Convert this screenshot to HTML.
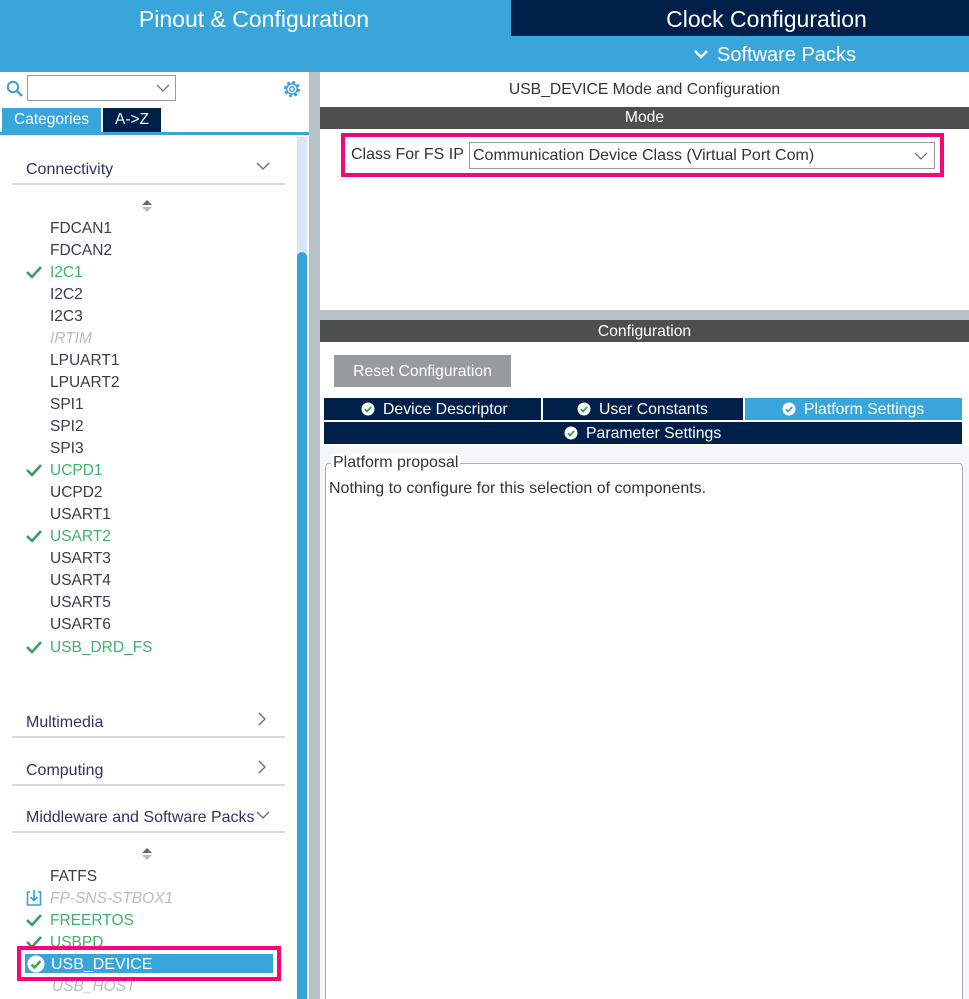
<!DOCTYPE html>
<html><head><meta charset="utf-8"><style>
*{margin:0;padding:0;box-sizing:border-box}
html,body{width:969px;height:999px;overflow:hidden}
body{background:#fff;font-family:"Liberation Sans",Arial,sans-serif;position:relative}
div,span{position:absolute}
.it{left:50px;font-size:15.5px;line-height:20px;color:#3a3a4a;white-space:nowrap}
.g{color:#3fb26e}
.d{color:#b8bcc4;font-style:italic}
.cat{left:26px;font-size:16px;color:#2e3564;white-space:nowrap}
.ln{left:12px;width:273px;height:2px;background:#d3dae0}
.tab{height:22px;background:#00204a;color:#fff;line-height:22px;text-align:center;top:398px}
.tt{font-size:15.8px;line-height:22px;color:#fff;white-space:nowrap}
</style></head><body>
<!-- header -->
<div style="left:0;top:0;width:969px;height:72px;background:#38a6da"></div>
<div style="left:511px;top:0;width:458px;height:36px;background:#00204a"></div>
<div style="left:0;top:6px;width:508px;text-align:center;color:#fff;font-size:23px">Pinout &amp; Configuration</div>
<div style="left:511px;top:6px;width:511px;text-align:center;color:#fff;font-size:23px">Clock Configuration</div>
<div style="left:693px;top:44px;color:#fff;font-size:20px;white-space:nowrap"><svg width="16" height="12" style="vertical-align:1px;margin-right:8px" viewBox="0 0 16 12"><path d="M2 3l6 6 6-6" stroke="#fff" stroke-width="2.5" fill="none"/></svg>Software Packs</div>

<!-- left panel -->
<svg style="position:absolute;left:6px;top:80px" width="18" height="18" viewBox="0 0 18 18"><circle cx="7" cy="7" r="5.2" stroke="#3a9fd8" stroke-width="2" fill="none"/><path d="M11 11l5 5" stroke="#3a9fd8" stroke-width="2.4"/></svg>
<div style="left:27px;top:75px;width:149px;height:26px;border:1px solid #9a9a9a"></div>
<svg style="position:absolute;left:156px;top:83px" width="14" height="10" viewBox="0 0 14 10"><path d="M1 2l6 6 6-6" stroke="#777" stroke-width="1.3" fill="none"/></svg>
<svg style="position:absolute;left:281px;top:78px" width="22" height="22" viewBox="0 0 22 22"><circle cx="11" cy="11" r="7" stroke="#3a9fd8" stroke-width="2.2" fill="none" stroke-dasharray="3 2.5"/><circle cx="11" cy="11" r="5.2" stroke="#3a9fd8" stroke-width="1.5" fill="none"/><circle cx="11" cy="11" r="2.3" stroke="#3a9fd8" stroke-width="1.5" fill="none"/></svg>
<div style="left:2px;top:108px;width:99px;height:25px;background:#38a6da;color:#fff;font-size:15.5px;line-height:24px;text-align:center">Categories</div>
<div style="left:103px;top:108px;width:58px;height:25px;background:#00204a;color:#fff;font-size:15.5px;line-height:24px;text-align:center">A-&gt;Z</div>
<div style="left:0;top:132px;width:309px;height:3px;background:#38a6da"></div>
<!-- scrollbar -->
<div style="left:297px;top:137px;width:10px;height:862px;background:#d7e7f6"></div>
<div style="left:297px;top:252px;width:10px;height:747px;background:#36a3da;border-radius:5px 5px 0 0"></div>
<div style="left:309px;top:72px;width:11px;height:927px;background:#b7c2c8"></div>

<div class="cat" style="top:161px">Connectivity</div>
<svg style="position:absolute;left:256px;top:161px" width="14" height="10" viewBox="0 0 14 10"><path d="M1 2l6 6 6-6" stroke="#6a6a6a" stroke-width="1.3" fill="none"/></svg>
<div class="ln" style="top:183px"></div>
<svg style="position:absolute;left:141px;top:199px" width="12" height="14" viewBox="0 0 12 14"><path d="M1 6l5-5 5 5z" fill="#666"/><path d="M1 8l5 5 5-5z" fill="#bbb"/></svg>

<div class="it" style="top:219px">FDCAN1</div>
<div class="it" style="top:241px">FDCAN2</div>
<div class="it g" style="top:263px">I2C1</div>
<div class="it" style="top:285px">I2C2</div>
<div class="it" style="top:307px">I2C3</div>
<div class="it d" style="top:329px">IRTIM</div>
<div class="it" style="top:351px">LPUART1</div>
<div class="it" style="top:373px">LPUART2</div>
<div class="it" style="top:395px">SPI1</div>
<div class="it" style="top:417px">SPI2</div>
<div class="it" style="top:439px">SPI3</div>
<div class="it g" style="top:461px">UCPD1</div>
<div class="it" style="top:483px">UCPD2</div>
<div class="it" style="top:505px">USART1</div>
<div class="it g" style="top:527px">USART2</div>
<div class="it" style="top:549px">USART3</div>
<div class="it" style="top:571px">USART4</div>
<div class="it" style="top:593px">USART5</div>
<div class="it" style="top:615px">USART6</div>
<div class="it g" style="top:638px">USB_DRD_FS</div>
<svg style="position:absolute;left:26px;top:265px" width="16" height="14" viewBox="0 0 16 14"><path d="M1 7l5 5 9-10" stroke="#3a9f5c" stroke-width="2.6" fill="none"/></svg>
<svg style="position:absolute;left:26px;top:463px" width="16" height="14" viewBox="0 0 16 14"><path d="M1 7l5 5 9-10" stroke="#3a9f5c" stroke-width="2.6" fill="none"/></svg>
<svg style="position:absolute;left:26px;top:529px" width="16" height="14" viewBox="0 0 16 14"><path d="M1 7l5 5 9-10" stroke="#3a9f5c" stroke-width="2.6" fill="none"/></svg>
<svg style="position:absolute;left:26px;top:640px" width="16" height="14" viewBox="0 0 16 14"><path d="M1 7l5 5 9-10" stroke="#3a9f5c" stroke-width="2.6" fill="none"/></svg>

<div class="cat" style="top:714px">Multimedia</div>
<svg style="position:absolute;left:257px;top:712px" width="10" height="14" viewBox="0 0 10 14"><path d="M2 1l6 6-6 6" stroke="#6a6a6a" stroke-width="1.3" fill="none"/></svg>
<div class="ln" style="top:736px"></div>
<div class="cat" style="top:762px">Computing</div>
<svg style="position:absolute;left:257px;top:760px" width="10" height="14" viewBox="0 0 10 14"><path d="M2 1l6 6-6 6" stroke="#6a6a6a" stroke-width="1.3" fill="none"/></svg>
<div class="ln" style="top:784px"></div>
<div class="cat" style="top:809px">Middleware and Software Packs</div>
<svg style="position:absolute;left:256px;top:810px" width="14" height="10" viewBox="0 0 14 10"><path d="M1 2l6 6 6-6" stroke="#6a6a6a" stroke-width="1.3" fill="none"/></svg>
<div class="ln" style="top:831px"></div>
<svg style="position:absolute;left:141px;top:847px" width="12" height="14" viewBox="0 0 12 14"><path d="M1 6l5-5 5 5z" fill="#666"/><path d="M1 8l5 5 5-5z" fill="#bbb"/></svg>

<div class="it" style="top:867px">FATFS</div>
<svg style="position:absolute;left:26px;top:889px" width="16" height="18" viewBox="0 0 16 18"><path d="M4 3H1.5v13h13V3H12" stroke="#3a9fd8" stroke-width="1.6" fill="none"/><path d="M8 1v10M4.5 8l3.5 3.5 3.5-3.5" stroke="#3a9fd8" stroke-width="1.6" fill="none"/></svg>
<div class="it d" style="top:889px">FP-SNS-STBOX1</div>
<svg style="position:absolute;left:26px;top:913px" width="16" height="14" viewBox="0 0 16 14"><path d="M1 7l5 5 9-10" stroke="#3a9f5c" stroke-width="2.6" fill="none"/></svg>
<div class="it g" style="top:911px">FREERTOS</div>
<svg style="position:absolute;left:26px;top:935px" width="16" height="14" viewBox="0 0 16 14"><path d="M1 7l5 5 9-10" stroke="#3a9f5c" stroke-width="2.6" fill="none"/></svg>
<div class="it g" style="top:933px">USBPD</div>
<div class="it d" style="top:977px;left:52px">USB_HOST</div>
<div style="left:17px;top:946px;width:264px;height:35px;border:4px solid #f5067a;background:#fff"></div>
<div style="left:24px;top:953px;width:250px;height:21px;background:#38a6da;border:1px solid #fff"></div>
<svg style="position:absolute;left:27px;top:955px" width="18" height="18" viewBox="0 0 18 18"><circle cx="9" cy="9" r="8.5" fill="#fff"/><path d="M4.5 9.5l3 3 6-6.5" stroke="#3a9f5c" stroke-width="2.4" fill="none"/></svg>
<div class="it" style="top:955px;left:51px;color:#fff;font-size:16px">USB_DEVICE</div>

<!-- right panel -->
<div style="left:320px;top:81px;width:649px;text-align:center;font-size:15.7px;color:#333">USB_DEVICE Mode and Configuration</div>
<div style="left:320px;top:107px;width:649px;height:22px;background:#4d4f4e;color:#fff;font-size:15.7px;line-height:22px;text-align:center">Mode</div>
<div style="left:341px;top:133px;width:603px;height:44px;border:4px solid #f5067a"></div>
<div style="left:351px;top:146px;font-size:16px;color:#333;white-space:nowrap">Class For FS IP</div>
<div style="left:469px;top:142px;width:466px;height:27px;border:1px solid #999;background:#fff;font-size:16px;line-height:25px;color:#333;padding-left:3px;white-space:nowrap">Communication Device Class (Virtual Port Com)</div>
<svg style="position:absolute;left:914px;top:151px" width="14" height="10" viewBox="0 0 14 10"><path d="M1 2l6 6 6-6" stroke="#777" stroke-width="1.3" fill="none"/></svg>
<div style="left:320px;top:310px;width:649px;height:10px;background:#b7c2c8"></div>
<div style="left:320px;top:320px;width:649px;height:22px;background:#4d4f4e;color:#fff;font-size:15.7px;line-height:23px;text-align:center">Configuration</div>
<div style="left:334px;top:355px;width:177px;height:32px;background:#969ba0;color:#fff;font-size:15.7px;line-height:33px;text-align:center;white-space:nowrap">Reset Configuration</div>
<div class="tab" style="left:324px;width:217px"></div>
<div class="tab" style="left:543px;width:200px"></div>
<div class="tab" style="left:745px;width:217px;background:#38a6da"></div>
<div class="tab" style="left:324px;top:422px;width:638px"></div>
<div class="tt" style="left:361px;top:399px"><svg width="14" height="14" viewBox="0 0 14 14" style="vertical-align:-2px;margin-right:8px"><circle cx="7" cy="7" r="6.5" fill="#fff"/><path d="M3.8 7.2l2.2 2.2 4.2-4.4" stroke="#3a9f5c" stroke-width="1.8" fill="none"/></svg>Device Descriptor</div>
<div class="tt" style="left:577px;top:399px"><svg width="14" height="14" viewBox="0 0 14 14" style="vertical-align:-2px;margin-right:8px"><circle cx="7" cy="7" r="6.5" fill="#fff"/><path d="M3.8 7.2l2.2 2.2 4.2-4.4" stroke="#3a9f5c" stroke-width="1.8" fill="none"/></svg>User Constants</div>
<div class="tt" style="left:782px;top:399px"><svg width="14" height="14" viewBox="0 0 14 14" style="vertical-align:-2px;margin-right:8px"><circle cx="7" cy="7" r="6.5" fill="#fff"/><path d="M3.8 7.2l2.2 2.2 4.2-4.4" stroke="#38a6da" stroke-width="1.8" fill="none"/></svg>Platform Settings</div>
<div class="tt" style="left:564px;top:423px"><svg width="14" height="14" viewBox="0 0 14 14" style="vertical-align:-2px;margin-right:8px"><circle cx="7" cy="7" r="6.5" fill="#fff"/><path d="M3.8 7.2l2.2 2.2 4.2-4.4" stroke="#3a9f5c" stroke-width="1.8" fill="none"/></svg>Parameter Settings</div>
<div style="left:320px;top:446px;width:649px;height:553px;background:#f4f6f8"></div>
<div style="left:325px;top:463px;width:638px;height:545px;border:1px solid #a9afb5;border-radius:4px;background:#fff"></div>
<div style="left:331px;top:454px;background:#fff;font-size:16px;color:#333;padding:0 2px;white-space:nowrap">Platform proposal</div>
<div style="left:329px;top:480px;font-size:16px;color:#333;white-space:nowrap">Nothing to configure for this selection of components.</div>
</body></html>
